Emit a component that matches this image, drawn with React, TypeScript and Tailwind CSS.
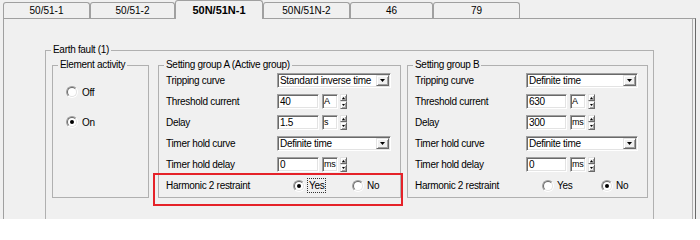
import React from "react";

const sunken =
  "border border-t-[#a0a0a0] border-l-[#a0a0a0] border-r-white border-b-white shadow-[inset_1px_1px_0_#696969,inset_-1px_-1px_0_#e3e3e3] bg-white";
const raised =
  "border border-t-[#e3e3e3] border-l-[#e3e3e3] border-r-[#696969] border-b-[#696969] shadow-[inset_1px_1px_0_#fff,inset_-1px_-1px_0_#a0a0a0] bg-[#f0f0f0]";

const tabs = [
  { label: "50/51-1", w: "w-[87px]" },
  { label: "50/51-2", w: "w-[85px]" },
  { label: "50N/51N-1", w: "w-[88px]", selected: true },
  { label: "50N/51N-2", w: "w-[87px]" },
  { label: "46", w: "w-[83px]" },
  { label: "79", w: "w-[87px]" },
];

const Radio = ({ checked }: { checked?: boolean }) => (
  <span className="inline-flex h-[12px] w-[12px] shrink-0 rounded-full border border-t-[#a0a0a0] border-l-[#a0a0a0] border-r-white border-b-white">
    <span className="flex h-full w-full items-center justify-center rounded-full border border-t-[#696969] border-l-[#696969] border-r-[#e3e3e3] border-b-[#e3e3e3] bg-white">
      {checked && <span className="h-[4px] w-[4px] rounded-full bg-black" />}
    </span>
  </span>
);

const GroupBox = ({
  title,
  className,
  children,
}: {
  title: string;
  className?: string;
  children: React.ReactNode;
}) => (
  <fieldset className={`border border-[#b0b0b0] ${className ?? ""}`}>
    <legend className="ml-[5px] px-[2px] leading-[12px]">{title}</legend>
    {children}
  </fieldset>
);

const Combo = ({ value, className }: { value: string; className: string }) => (
  <div className={`flex h-[15px] items-center ${sunken} ${className}`}>
    <span className="flex-1 overflow-hidden whitespace-nowrap pl-[2px] leading-[13px]">{value}</span>
    <div className={`mr-[1px] flex h-[11px] w-[13px] items-center justify-center ${raised}`}>
      <svg width="5" height="3" viewBox="0 0 5 3">
        <path d="M0 0h5L2.5 3z" fill="#000" />
      </svg>
    </div>
  </div>
);

const Spin = () => (
  <div className="ml-[2px] flex h-[15px] w-[7px] flex-col">
    <div className={`flex h-[7px] items-center justify-center ${raised}`}>
      <svg width="3" height="2" viewBox="0 0 3 2">
        <path d="M1.5 0L3 2H0z" fill="#000" />
      </svg>
    </div>
    <div className={`flex h-[8px] items-center justify-center ${raised}`}>
      <svg width="3" height="2" viewBox="0 0 3 2">
        <path d="M0 0h3L1.5 2z" fill="#000" />
      </svg>
    </div>
  </div>
);

const NumField = ({ value, unit, w }: { value: string; unit: string; w: string }) => (
  <div className="flex items-center">
    <div className={`h-[15px] pl-[2px] leading-[13px] ${w} ${sunken}`}>{value}</div>
    <div className={`ml-[3px] h-[15px] w-[16px] pl-[1px] text-[9px] leading-[13px] ${sunken}`}>{unit}</div>
    <Spin />
  </div>
);

const Row = ({ label, children }: { label: string; children: React.ReactNode }) => (
  <div className="flex h-[15px] items-center">
    <span className="w-[111px] shrink-0 whitespace-nowrap">{label}</span>
    {children}
  </div>
);

type Group = {
  title: string;
  curve: string;
  threshold: string;
  delay: string;
  delayUnit: string;
  harmonicYes: boolean;
  highlight?: boolean;
  className: string;
  comboW: string;
  numW: string;
};

const SettingGroup = ({ g }: { g: Group }) => (
  <GroupBox title={g.title} className={g.className}>
    <div className="flex flex-col gap-[6px] pb-[4px] pl-[7px] pt-[2px]">
      <Row label="Tripping curve">
        <Combo value={g.curve} className={g.comboW} />
      </Row>
      <Row label="Threshold current">
        <NumField value={g.threshold} unit="A" w={g.numW} />
      </Row>
      <Row label="Delay">
        <NumField value={g.delay} unit={g.delayUnit} w={g.numW} />
      </Row>
      <Row label="Timer hold curve">
        <Combo value="Definite time" className={g.comboW} />
      </Row>
      <Row label="Timer hold delay">
        <NumField value="0" unit="ms" w={g.numW} />
      </Row>
      <div className="relative flex h-[15px] items-center">
        <span className="w-[111px] shrink-0 whitespace-nowrap">Harmonic 2 restraint</span>
        <div className="ml-[16px] flex w-[59px] items-center">
          <Radio checked={g.harmonicYes} />
          {g.highlight ? (
            <span className="ml-[2px] border border-dotted border-[#333] px-[1px] leading-[13px]">Yes</span>
          ) : (
            <span className="ml-[3px]">Yes</span>
          )}
        </div>
        <div className="flex items-center">
          <Radio checked={!g.harmonicYes} />
          <span className="ml-[3px]">No</span>
        </div>
        {g.highlight && (
          <div className="pointer-events-none absolute -left-[13px] -top-[5px] h-[33px] w-[250px] border-2 border-[#e52229]" />
        )}
      </div>
    </div>
  </GroupBox>
);

const groupA: Group = {
  title: "Setting group A (Active group)",
  curve: "Standard inverse time",
  threshold: "40",
  delay: "1.5",
  delayUnit: "s",
  harmonicYes: true,
  highlight: true,
  className: "ml-[9px] w-[243px]",
  comboW: "w-[114px]",
  numW: "w-[42px]",
};

const groupB: Group = {
  title: "Setting group B",
  curve: "Definite time",
  threshold: "630",
  delay: "300",
  delayUnit: "ms",
  harmonicYes: false,
  className: "ml-[6px] w-[241px]",
  comboW: "w-[112px]",
  numW: "w-[41px]",
};

export default function App() {
  return (
    <div className="h-[219px] w-[700px] overflow-hidden bg-[#f0f0f0] text-[10px] tracking-[-0.3px] text-black font-['Liberation_Sans',Arial,sans-serif]">
      <div className="relative z-10 flex h-[18px] items-end pl-[3px] tracking-normal">
        {tabs.map((t) =>
          t.selected ? (
            <div
              key={t.label}
              className={`-mb-[1px] flex h-[19px] ${t.w} shrink-0 justify-center rounded-t-[3px] border border-b-0 border-[#a0a0a0] bg-[#f0f0f0] pt-[3px] text-[11px] font-bold leading-[12px]`}
            >
              {t.label}
            </div>
          ) : (
            <div
              key={t.label}
              className={`flex h-[16px] ${t.w} shrink-0 items-center justify-center rounded-t-[3px] border border-b-0 border-[#a0a0a0] text-[10px]`}
            >
              {t.label}
            </div>
          )
        )}
      </div>
      <div className="ml-[3px] h-[300px] w-[693px] border border-b-0 border-t-[#a0a0a0] border-l-[#a0a0a0] border-r-[#696969] pl-[41px] pt-[25px] shadow-[inset_-2px_0_0_#f0f0f0,inset_-3px_0_0_#b0b0b0]">
        <GroupBox title="Earth fault (1)" className="h-[260px] w-[609px]">
          <div className="flex items-stretch pl-[6px] pt-[3px]">
            <GroupBox title="Element activity" className="w-[97px]">
              <div className="flex flex-col gap-[18px] pl-[13px] pt-[15px]">
                <div className="flex h-[12px] items-center">
                  <Radio />
                  <span className="ml-[4px]">Off</span>
                </div>
                <div className="flex h-[12px] items-center">
                  <Radio checked />
                  <span className="ml-[4px]">On</span>
                </div>
              </div>
            </GroupBox>
            <SettingGroup g={groupA} />
            <SettingGroup g={groupB} />
          </div>
        </GroupBox>
      </div>
    </div>
  );
}
